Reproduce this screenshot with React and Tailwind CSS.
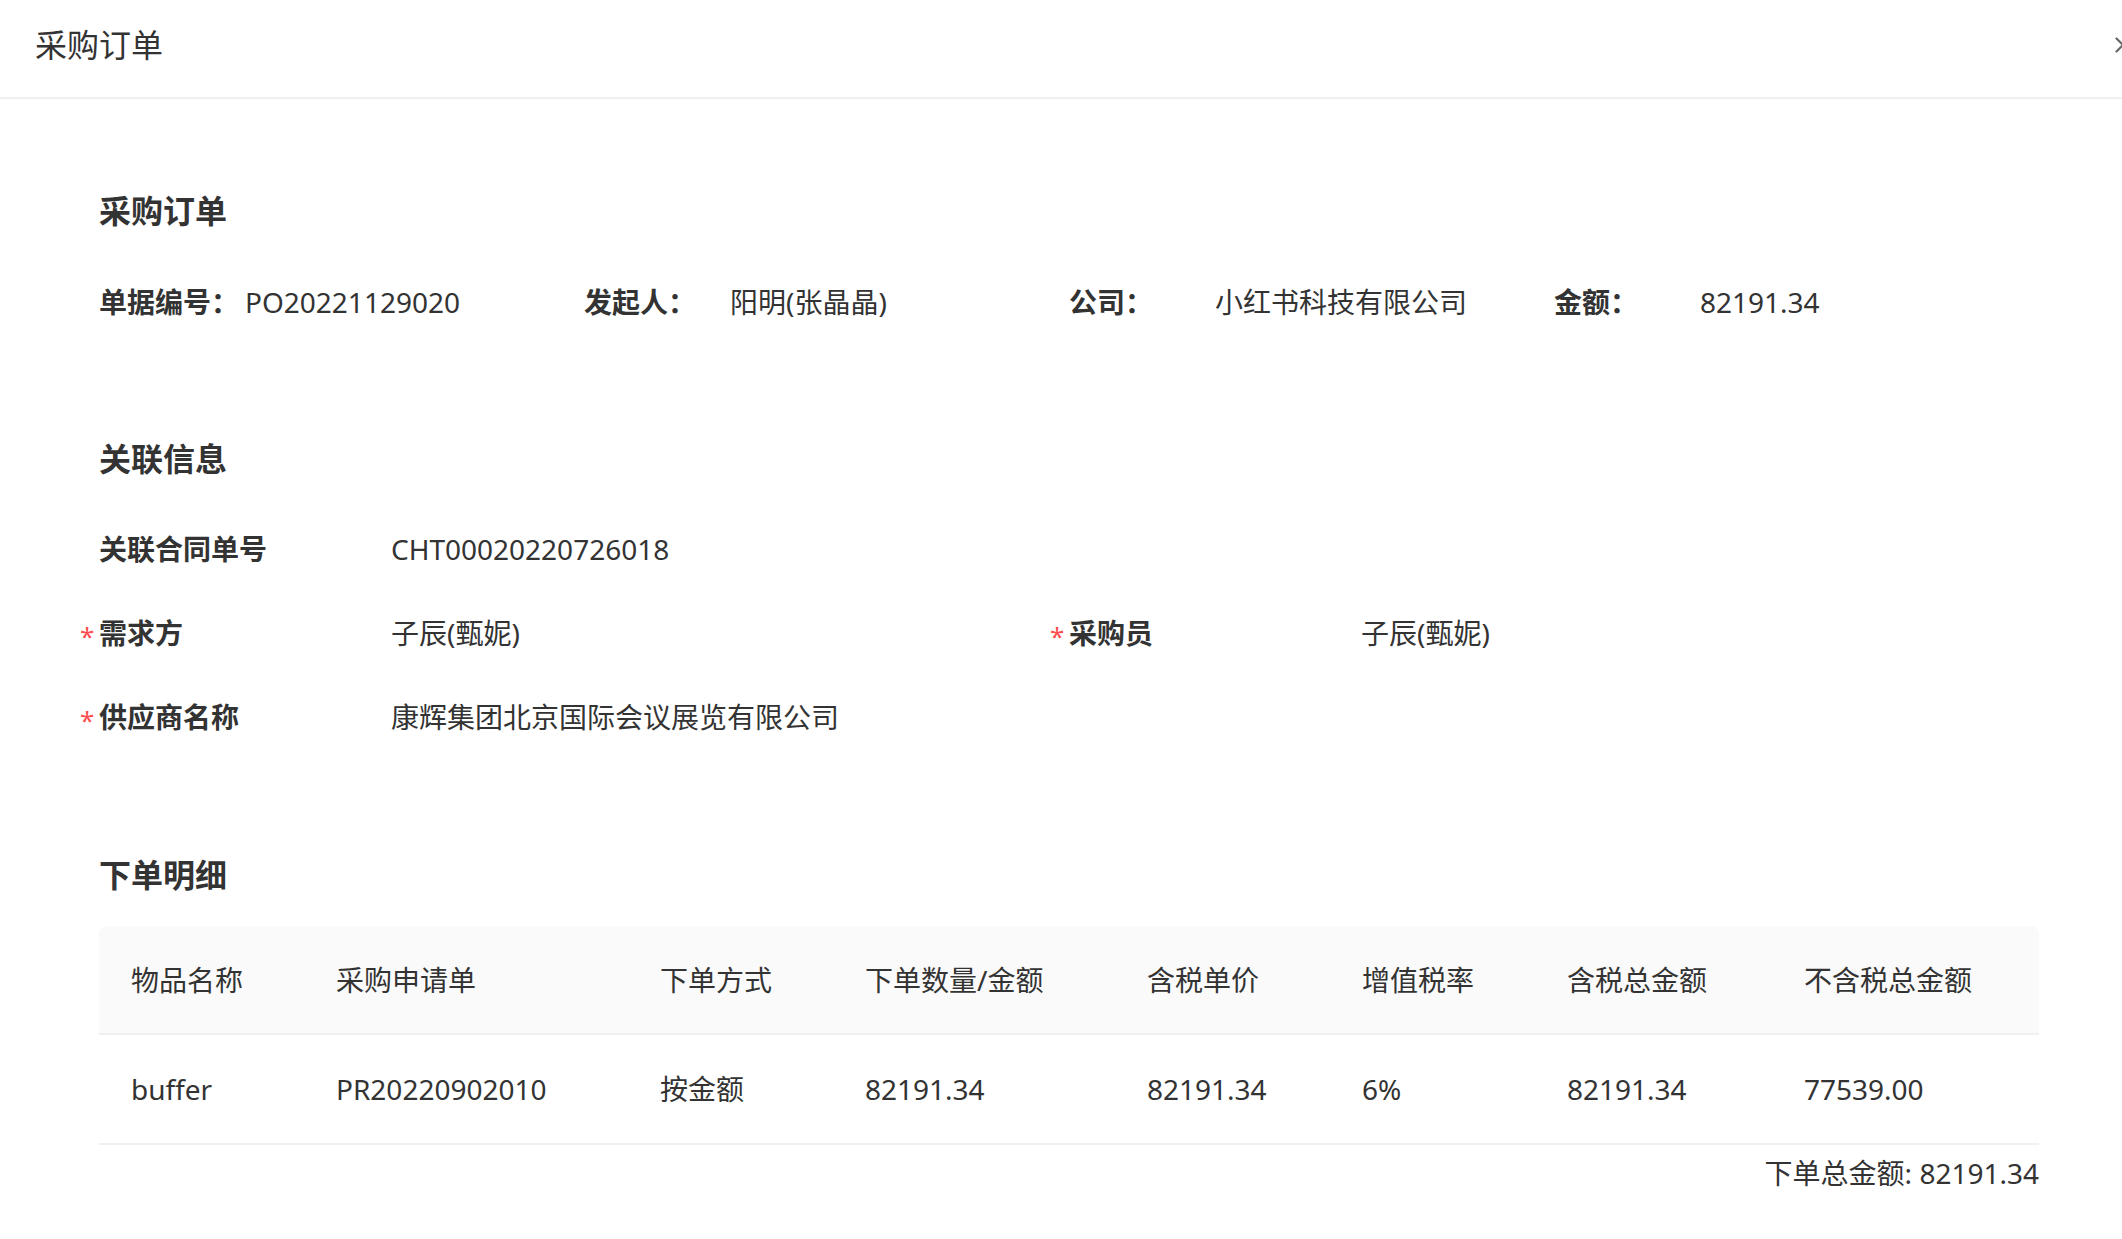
import { X } from 'lucide-react';

const FONT = { fontFamily: '"Noto Sans", "Noto Sans CJK SC", sans-serif' };

const INFO = [
  { label: '单据编号：', value: 'PO20221129020' },
  { label: '发起人：', value: '阳明(张晶晶)' },
  { label: '公司：', value: '小红书科技有限公司' },
  { label: '金额：', value: '82191.34' },
];

const COLS = ['物品名称', '采购申请单', '下单方式', '下单数量/金额', '含税单价', '增值税率', '含税总金额', '不含税总金额'];
const ROW = ['buffer', 'PR20220902010', '按金额', '82191.34', '82191.34', '6%', '82191.34', '77539.00'];

function SectionTitle({ children, className = '' }) {
  return <h2 className={`text-[32px] leading-[48px] font-bold text-[#333] ${className}`}>{children}</h2>;
}

function Field({ label, value, required }) {
  return (
    <div className="relative flex items-center h-[84px]">
      {required && <span className="absolute left-[-19px] top-[30px] text-[26px] leading-[30px] text-[#ff4d4f]">*</span>}
      <span className="w-[292px] shrink-0 text-[28px] font-bold text-[#333]">{label}</span>
      <span className="text-[28px] text-[#333]">{value}</span>
    </div>
  );
}

export default function App() {
  return (
    <div className="w-[2122px] min-h-[1239px] bg-white overflow-hidden" style={FONT}>
      {/* Cabecera */}
      <div className="h-[99px] flex items-center justify-between pl-[35px] pb-[8px] border-b-2 border-[#f0f0f0]">
        <span className="text-[32px] text-[#333]">采购订单</span>
        <X size={26} strokeWidth={2} className="text-[#666] mr-[-14px]" />
      </div>

      <div className="pl-[99px] w-[2039px]">
        {/* 采购订单 */}
        <SectionTitle className="mt-[88px]">采购订单</SectionTitle>
        <div className="grid grid-cols-4 mt-[45px]">
          {INFO.map(f => (
            <div key={f.label} className="flex items-center h-[44px] text-[28px] text-[#333]">
              <span className="w-[146px] shrink-0 font-bold">{f.label}</span>
              <span>{f.value}</span>
            </div>
          ))}
        </div>

        {/* 关联信息 */}
        <SectionTitle className="mt-[111px]">关联信息</SectionTitle>
        <div className="mt-[24px] grid grid-cols-[970px_970px]">
          <Field label="关联合同单号" value="CHT00020220726018" />
          <div />
          <Field label="需求方" value="子辰(甄妮)" required />
          <Field label="采购员" value="子辰(甄妮)" required />
          <Field label="供应商名称" value="康辉集团北京国际会议展览有限公司" required />
        </div>

        {/* 下单明细 */}
        <SectionTitle className="mt-[92px]">下单明细</SectionTitle>
        <div className="mt-[27px] w-[1940px]">
          <div className="grid grid-cols-[205px_324px_205px_282px_215px_205px_237px_267px] h-[109px] items-center bg-[#fafafa] rounded-t-[8px] border-b-2 border-[#f0f0f0]">
            {COLS.map(c => (
              <div key={c} className="px-[32px] text-[28px] text-[#333]">{c}</div>
            ))}
          </div>
          <div className="grid grid-cols-[205px_324px_205px_282px_215px_205px_237px_267px] h-[110px] items-center border-b-2 border-[#f0f0f0]">
            {ROW.map((c, i) => (
              <div key={i} className="px-[32px] text-[28px] text-[#333]">{c}</div>
            ))}
          </div>
          <div className="mt-[6px] text-right text-[28px] leading-[44px] text-[#333]">下单总金额: 82191.34</div>
        </div>
      </div>
    </div>
  );
}
